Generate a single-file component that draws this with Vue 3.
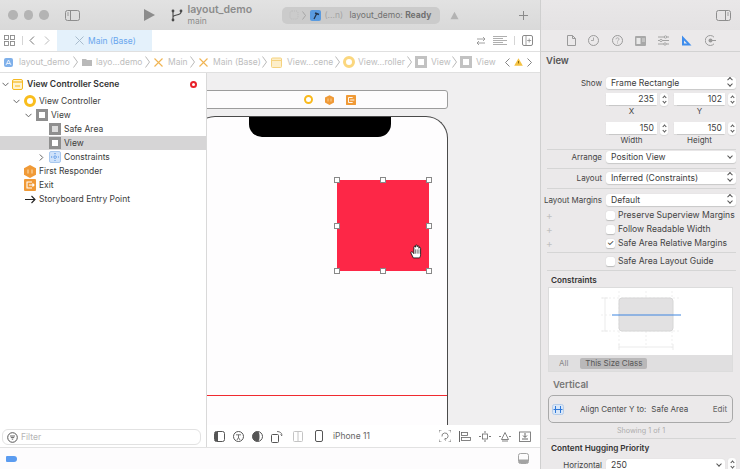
<script setup>
const outlineRows = [
  { label: 'View Controller', depth: 1, arrow: 'down', icon: 'vc' },
  { label: 'View', depth: 2, arrow: 'down', icon: 'view' },
  { label: 'Safe Area', depth: 3, icon: 'safe' },
  { label: 'View', depth: 3, icon: 'view', selected: true },
  { label: 'Constraints', depth: 3, arrow: 'right', icon: 'constraints' },
  { label: 'First Responder', depth: 1, icon: 'responder' },
  { label: 'Exit', depth: 1, icon: 'exit' },
  { label: 'Storyboard Entry Point', depth: 1, icon: 'entry' }
]

const handles = [
  [0, 0], [50, 0], [100, 0],
  [0, 50], [100, 50],
  [0, 100], [50, 100], [100, 100]
]

const marginChecks = [
  { label: 'Preserve Superview Margins', checked: false },
  { label: 'Follow Readable Width', checked: false },
  { label: 'Safe Area Relative Margins', checked: true }
]
</script>

<template>
  <div class="window">
    <div class="main">
      <header class="toolbar">
        <div class="lights"><i></i><i></i><i></i></div>
        <svg class="tb-side" width="15" height="11" viewBox="0 0 15 11"><rect x=".5" y=".5" width="14" height="10" rx="2" fill="none" stroke="#8d8d8d"/><path d="M5.5 .5v10" stroke="#8d8d8d"/><path d="M2 3h2M2 5h2" stroke="#8d8d8d" stroke-width=".8"/></svg>
        <svg class="tb-play" width="11" height="12" viewBox="0 0 11 12"><path d="M0 0l11 6-11 6z" fill="#8c8c8c"/></svg>
        <svg class="tb-branch" width="12" height="13" viewBox="0 0 12 13"><g fill="none" stroke="#4a4a4a" stroke-width="1.1"><path d="M2 2v9M2 8c0-3 8-1 8-5"/></g><circle cx="2" cy="2" r="1.4" fill="#4a4a4a"/><circle cx="2" cy="11" r="1.4" fill="#4a4a4a"/><circle cx="10" cy="2" r="1.4" fill="#4a4a4a"/></svg>
        <div class="tb-title"><b>layout_demo</b><span>main</span></div>
        <div class="scheme">
          <svg width="10" height="10" viewBox="0 0 10 10"><rect x="1" y="1" width="8" height="8" rx="2" fill="none" stroke="#bdbdbd" stroke-dasharray="1 1"/></svg>
          <svg class="scheme-chev" width="4" height="9" viewBox="0 0 4 9"><path d="M.5 .5l3 4-3 4" fill="none" stroke="#9c9c9c" stroke-width=".8"/></svg>
          <svg class="scheme-app" width="11" height="11" viewBox="0 0 11 11"><rect width="11" height="11" rx="2" fill="#5a9be0"/><path d="M4 9l3-6" stroke="#24344a" stroke-width="1.2"/><path d="M5 3l4 1.5" stroke="#24344a" stroke-width="1.4"/></svg>
          <span class="scheme-dim">(...n)</span>
          <span class="scheme-status">layout_demo: <b>Ready</b></span>
        </div>
        <svg class="tb-warn" width="9" height="9" viewBox="0 0 9 9"><path d="M4.5 .7L8.5 8.3H.5z" fill="#b3b3b3"/></svg>
        <svg class="tb-plus" width="9" height="9" viewBox="0 0 9 9"><path d="M4.5 0v9M0 4.5h9" stroke="#8a8a8a" stroke-width="1"/></svg>
      </header>

      <div class="tabbar">
        <svg class="tab-grid" width="11" height="11" viewBox="0 0 11 11"><g fill="none" stroke="#8a8a8a" stroke-width=".9"><rect x=".5" y=".5" width="4" height="4"/><rect x="6.5" y=".5" width="4" height="4"/><rect x=".5" y="6.5" width="4" height="4"/><rect x="6.5" y="6.5" width="4" height="4"/></g></svg>
        <i class="vsep"></i>
        <svg class="tab-back" width="6" height="9" viewBox="0 0 6 9"><path d="M5 .5l-4 4 4 4" fill="none" stroke="#777" stroke-width="1"/></svg>
        <svg class="tab-fwd" width="6" height="9" viewBox="0 0 6 9"><path d="M1 .5l4 4-4 4" fill="none" stroke="#bbb" stroke-width="1"/></svg>
        <div class="tab">
          <svg width="9" height="9" viewBox="0 0 9 9"><path d="M.5 .5l8 8M8.5 .5l-8 8" stroke="#a9bccd" stroke-width="1"/></svg>
          <span>Main (Base)</span>
        </div>
        <div class="tab-tools">
          <svg width="10" height="10" viewBox="0 0 10 10"><path d="M1 3h8M7 1l2 2-2 2M9 7H1M3 5L1 7l2 2" fill="none" stroke="#8a8a8a" stroke-width=".8"/></svg>
          <svg width="14" height="10" viewBox="0 0 14 10"><path d="M0 .5h14M0 2.5h10M0 4.5h14M0 6.5h10M0 8.5h14" stroke="#9a9a9a" stroke-width=".8"/></svg>
          <i class="vsep"></i>
          <svg width="11" height="11" viewBox="0 0 11 11"><rect x=".5" y=".5" width="10" height="10" rx="1.5" fill="none" stroke="#8a8a8a"/><path d="M4 .5v10M7.2 3.5v4M5.2 5.5h4" stroke="#8a8a8a" stroke-width=".8"/></svg>
        </div>
      </div>

      <nav class="jumpbar">
        <svg width="9" height="9" viewBox="0 0 9 9"><rect width="9" height="9" rx="2" fill="#7fb0ea"/><path d="M2 7l2.5-5L7 7M3 5.5h3" fill="none" stroke="#fff" stroke-width=".8"/></svg>
        <span class="crumb c1">layout_demo</span>
        <svg class="chev" width="5" height="12" viewBox="0 0 5 12"><path d="M.5 .5l4 5.5-4 5.5" fill="none" stroke="#a8a8a8" stroke-width=".8"/></svg>
        <svg width="10" height="8" viewBox="0 0 10 8"><path d="M0 1h4l1 1h5v6H0z" fill="#b9b9b9"/></svg>
        <span class="crumb c2">layo...demo</span>
        <svg class="chev" width="5" height="12" viewBox="0 0 5 12"><path d="M.5 .5l4 5.5-4 5.5" fill="none" stroke="#a8a8a8" stroke-width=".8"/></svg>
        <svg width="9" height="9" viewBox="0 0 9 9"><path d="M.5 .5l8 8M8.5 .5l-8 8" stroke="#f0b452" stroke-width="1.1"/></svg>
        <span class="crumb c3">Main</span>
        <svg class="chev" width="5" height="12" viewBox="0 0 5 12"><path d="M.5 .5l4 5.5-4 5.5" fill="none" stroke="#a8a8a8" stroke-width=".8"/></svg>
        <svg width="9" height="9" viewBox="0 0 9 9"><path d="M.5 .5l8 8M8.5 .5l-8 8" stroke="#f0b452" stroke-width="1.1"/></svg>
        <span class="crumb c4">Main (Base)</span>
        <svg class="chev" width="5" height="12" viewBox="0 0 5 12"><path d="M.5 .5l4 5.5-4 5.5" fill="none" stroke="#a8a8a8" stroke-width=".8"/></svg>
        <svg width="11" height="11" viewBox="0 0 11 11"><rect x=".5" y="1" width="10" height="9.5" rx="1" fill="#fdeec9" stroke="#f5d27e"/><path d="M.5 3.5h10" stroke="#f5d27e"/></svg>
        <span class="crumb c5">View...cene</span>
        <svg class="chev" width="5" height="12" viewBox="0 0 5 12"><path d="M.5 .5l4 5.5-4 5.5" fill="none" stroke="#a8a8a8" stroke-width=".8"/></svg>
        <i class="crumb-vc"></i>
        <span class="crumb c6">View...roller</span>
        <svg class="chev" width="5" height="12" viewBox="0 0 5 12"><path d="M.5 .5l4 5.5-4 5.5" fill="none" stroke="#a8a8a8" stroke-width=".8"/></svg>
        <i class="crumb-view"></i>
        <span class="crumb c7">View</span>
        <svg class="chev" width="5" height="12" viewBox="0 0 5 12"><path d="M.5 .5l4 5.5-4 5.5" fill="none" stroke="#a8a8a8" stroke-width=".8"/></svg>
        <i class="crumb-view"></i>
        <span class="crumb c7">View</span>
        <div class="jump-nav">
          <svg width="5" height="9" viewBox="0 0 5 9"><path d="M4.5 .5l-4 4 4 4" fill="none" stroke="#777" stroke-width=".9"/></svg>
          <svg width="9" height="8" viewBox="0 0 9 8"><path d="M4.5 .3L8.8 7.7H.2z" fill="#f5c242"/><path d="M4.5 3v2.4" stroke="#8a6a10"/></svg>
          <svg width="5" height="9" viewBox="0 0 5 9"><path d="M.5 .5l4 4-4 4" fill="none" stroke="#777" stroke-width=".9"/></svg>
        </div>
      </nav>

      <div class="workspace">
        <aside class="outline">
          <div class="scene-row">
            <svg class="arrow" width="7" height="5" viewBox="0 0 7 5"><path d="M.5 .8l3 3 3-3" fill="none" stroke="#666"/></svg>
            <svg class="scene-ic" width="11" height="11" viewBox="0 0 11 11"><rect x=".5" y=".5" width="10" height="10" rx="1.5" fill="#fff3d0" stroke="#f5b921"/><path d="M.5 3h10" stroke="#f5b921" stroke-width="1.2"/><path d="M3 7h5" stroke="#f5b921"/></svg>
            <b>View Controller Scene</b>
            <i class="red-dot"></i>
          </div>
          <div class="rows">
            <div v-for="row in outlineRows" :key="row.label + row.depth" class="row" :class="['d' + row.depth, { selected: row.selected }]">
              <span class="arrow">
                <svg v-if="row.arrow === 'down'" width="7" height="5" viewBox="0 0 7 5"><path d="M.5 .8l3 3 3-3" fill="none" stroke="#666"/></svg>
                <svg v-else-if="row.arrow === 'right'" width="5" height="7" viewBox="0 0 5 7"><path d="M.8 .5l3 3-3 3" fill="none" stroke="#666"/></svg>
              </span>
              <i v-if="row.icon === 'vc'" class="ic-vc"></i>
              <i v-else-if="row.icon === 'view'" class="ic-view"></i>
              <i v-else-if="row.icon === 'safe'" class="ic-view ic-safe"></i>
              <svg v-else-if="row.icon === 'constraints'" class="ic" width="12" height="12" viewBox="0 0 12 12"><rect x=".5" y=".5" width="11" height="11" rx="1.5" fill="#cfe2fa" stroke="#a9c8ee"/><path d="M6 2v8M2 6h8" stroke="#3d84e0" stroke-dasharray="1.2 1.2"/></svg>
              <svg v-else-if="row.icon === 'responder'" class="ic" width="12" height="13" viewBox="0 0 12 13"><path d="M6 0l6 3.2v6.6L6 13 0 9.8V3.2z" fill="#f09a37"/><path d="M4 4.5v4M8 4.5v4" stroke="#fce0b8"/></svg>
              <svg v-else-if="row.icon === 'exit'" class="ic" width="12" height="12" viewBox="0 0 12 12"><rect width="12" height="12" rx="1" fill="#f09a37"/><path d="M8 3H3v6h5M5 6h5M8.5 4.5L10 6 8.5 7.5" fill="none" stroke="#fff" stroke-width="1.1"/></svg>
              <svg v-else class="ic" width="12" height="9" viewBox="0 0 12 9"><path d="M1 4.5h10M7.5 1L11 4.5 7.5 8" fill="none" stroke="#222" stroke-width="1.1"/></svg>
              <span class="row-label">{{ row.label }}</span>
            </div>
          </div>
          <div class="filter">
            <svg width="11" height="11" viewBox="0 0 11 11"><circle cx="5.5" cy="5.5" r="4.8" fill="none" stroke="#555"/><path d="M3 4h5M3.8 5.6h3.4M4.8 7.2h1.4" stroke="#555" stroke-width=".9"/></svg>
            <span>Filter</span>
          </div>
        </aside>

        <section class="canvas-col">
          <div class="canvas">
            <div class="scene-bar">
              <i class="bar-vc"></i>
              <svg width="9" height="10" viewBox="0 0 12 13"><path d="M6 0l6 3.2v6.6L6 13 0 9.8V3.2z" fill="#f09a37"/><path d="M4 4.5v4M8 4.5v4" stroke="#fce0b8"/></svg>
              <svg width="10" height="10" viewBox="0 0 12 12"><rect width="12" height="12" rx="1" fill="#f09a37"/><path d="M8 3H3v6h5M5 6h5" fill="none" stroke="#fff" stroke-width="1.1"/></svg>
            </div>
            <div class="phone">
              <div class="notch"></div>
              <div class="red-view">
                <i v-for="h in handles" :key="h.join()" class="handle" :style="{ left: h[0] + '%', top: h[1] + '%' }"></i>
                <svg class="hand" width="12" height="15" viewBox="0 0 11 14"><path d="M3 13L.8 8.5C.3 7.3 1.8 6.8 2.5 7.8L3.5 9V3C3.5 1.8 5 1.8 5 3V1.8C5 .6 6.6 .6 6.6 1.8V2.5C6.6 1.3 8.2 1.3 8.2 2.5V4C8.2 2.8 9.8 2.8 9.8 4V10C9.8 11.5 9 12.5 8.8 13z" fill="#fff" stroke="#111" stroke-width=".8"/><path d="M5 5v4M6.6 5v4M8.2 5v4" stroke="#555" stroke-width=".7"/></svg>
              </div>
              <div class="safe-line"></div>
            </div>
          </div>
          <div class="canvas-tools">
            <svg width="11" height="11" viewBox="0 0 11 11"><rect x=".5" y=".5" width="10" height="10" rx="2" fill="none" stroke="#555"/><rect x="1" y="1" width="3" height="9" fill="#555"/></svg>
            <svg width="11" height="11" viewBox="0 0 11 11"><circle cx="5.5" cy="5.5" r="5" fill="none" stroke="#555"/><path d="M3 3.8h5M5.5 3.8v3M5.5 6.5L4 9M5.5 6.5L7 9" stroke="#555" stroke-width=".8" fill="none"/></svg>
            <svg width="11" height="11" viewBox="0 0 11 11"><circle cx="5.5" cy="5.5" r="5" fill="#fff" stroke="#555"/><path d="M5.5 .5a5 5 0 000 10 2 5 0 000-10z" fill="#555"/></svg>
            <svg width="12" height="13" viewBox="0 0 12 13"><rect x=".5" y="4.5" width="7" height="8" rx="1" fill="none" stroke="#555"/><path d="M6 1.5c3 0 5 1.5 5 4M9.5 4.5l1.5 1.5" fill="none" stroke="#555" stroke-width=".8"/></svg>
            <svg class="tool-split" width="10" height="11" viewBox="0 0 10 11"><rect x=".5" y=".5" width="9" height="10" rx="1" fill="none" stroke="#c4c4c4"/><path d="M5 .5v10" stroke="#c4c4c4"/></svg>
            <svg class="tool-phone" width="8" height="12" viewBox="0 0 8 12"><rect x=".5" y=".5" width="7" height="11" rx="1.5" fill="none" stroke="#555"/></svg>
            <span class="device">iPhone 11</span>
            <div class="canvas-tools-right">
              <svg width="12" height="12" viewBox="0 0 12 12"><path d="M0 2.5V0h2.500M9.5 0H12v2.5M0 9.5V12h2.500M9.5 12H12V9.5" fill="none" stroke="#666" stroke-width=".8"/><path d="M3 6.500A3 3 0 119 5.500 3 3 0 016 9M6.800 8L5.500 9.300 6.800 10.500" fill="none" stroke="#666" stroke-width=".8"/></svg>
              <svg width="12" height="11" viewBox="0 0 12 11"><path d="M.5 0v11" stroke="#666"/><rect x="2.5" y="1.5" width="6" height="3" fill="none" stroke="#666" stroke-width=".8"/><rect x="2.5" y="6.5" width="9" height="3" fill="none" stroke="#666" stroke-width=".8"/></svg>
              <svg width="12" height="11" viewBox="0 0 12 11"><rect x="3.5" y="3" width="5" height="5" fill="none" stroke="#666" stroke-width=".8"/><path d="M6 0v2M6 9v2M0 5.5h2M10 5.5h2" stroke="#666" stroke-width=".9"/></svg>
              <svg width="12" height="11" viewBox="0 0 12 11"><path d="M6 1.5l3.5 7h-7z" fill="none" stroke="#666" stroke-width=".8"/><path d="M0 5.5h2M10 5.5h2M3 10h6" stroke="#666" stroke-width=".8"/></svg>
              <svg width="12" height="11" viewBox="0 0 12 11"><rect x=".5" y="1" width="11" height="9.5" fill="none" stroke="#666" stroke-width=".8"/><path d="M6 2v4M4 4.5L6 6.500l2-2M3 8h6" fill="none" stroke="#555" stroke-width=".9"/></svg>
            </div>
          </div>
        </section>
      </div>

      <footer class="debugbar">
        <i class="tag"></i>
        <svg width="11" height="11" viewBox="0 0 11 11"><rect x=".5" y=".5" width="10" height="10" rx="2" fill="none" stroke="#a3a3a3"/><rect x="1" y="6.5" width="9" height="3.5" fill="#a3a3a3"/></svg>
      </footer>
    </div>

    <aside class="inspector">
      <div class="insp-top">
        <svg width="15" height="11" viewBox="0 0 15 11"><rect x=".5" y=".5" width="14" height="10" rx="2" fill="none" stroke="#8d8d8d"/><path d="M9.5 .5v10" stroke="#8d8d8d"/><path d="M11 3h2M11 5h2" stroke="#8d8d8d" stroke-width=".8"/></svg>
      </div>
      <div class="insp-tabs">
        <svg width="9" height="11" viewBox="0 0 9 11"><path d="M.5 .5h5l3 3v7h-8z M5.5 .5v3h3" fill="none" stroke="#9a9a9a"/></svg>
        <svg width="11" height="11" viewBox="0 0 11 11"><circle cx="5.5" cy="5.5" r="5" fill="none" stroke="#9a9a9a"/><path d="M5.5 2.5v3H3" fill="none" stroke="#9a9a9a" stroke-width=".8"/></svg>
        <svg width="11" height="11" viewBox="0 0 11 11"><circle cx="5.5" cy="5.5" r="5" fill="none" stroke="#9a9a9a"/><path d="M4 4.3c0-2 3-2 3 0 0 1-1.500 1-1.500 2.200M5.5 7.5v1" fill="none" stroke="#9a9a9a" stroke-width=".8"/></svg>
        <svg width="11" height="10" viewBox="0 0 11 10"><rect width="11" height="10" rx="1" fill="#a8a8a8"/><rect x="1.5" y="2" width="4" height="6" fill="#e9e9e9"/><path d="M7 3h3M7 5h3" stroke="#e9e9e9" stroke-width=".8"/></svg>
        <svg width="11" height="11" viewBox="0 0 11 11"><path d="M0 2h11M0 5.5h11M0 9h11" stroke="#9a9a9a" stroke-width=".9"/><circle cx="7.5" cy="2" r="1.2" fill="#ececec" stroke="#9a9a9a" stroke-width=".8"/><circle cx="3" cy="5.5" r="1.2" fill="#ececec" stroke="#9a9a9a" stroke-width=".8"/><circle cx="7" cy="9" r="1.2" fill="#ececec" stroke="#9a9a9a" stroke-width=".8"/></svg>
        <svg width="11" height="11" viewBox="0 0 11 11"><path d="M1 .5v10h9.500z" fill="#3f8ded"/><path d="M3 5.500v3h3z" fill="#ececec"/></svg>
        <svg width="11" height="11" viewBox="0 0 11 11"><path d="M9 2.200a5 5 0 100 6.600" fill="none" stroke="#9a9a9a"/><circle cx="5.5" cy="5.5" r="2" fill="#9a9a9a"/><path d="M5.5 5.5H11" stroke="#9a9a9a"/></svg>
      </div>

      <div class="insp-body">
        <h3 class="insp-title">View</h3>

        <div class="form-row show-row">
          <label>Show</label>
          <div class="select">Frame Rectangle<span class="updown"></span></div>
        </div>

        <div class="frame-grid first">
          <div class="num">235</div><span class="stepper"></span>
          <div class="num">102</div><span class="stepper"></span>
          <span class="cap">X</span><span></span>
          <span class="cap">Y</span><span></span>
        </div>
        <div class="frame-grid">
          <div class="num">150</div><span class="stepper"></span>
          <div class="num">150</div><span class="stepper"></span>
          <span class="cap">Width</span><span></span>
          <span class="cap">Height</span><span></span>
        </div>

        <hr class="sep s1" />
        <div class="form-row">
          <label>Arrange</label>
          <div class="select">Position View<span class="down"></span></div>
        </div>
        <hr class="sep s2" />
        <div class="form-row">
          <label>Layout</label>
          <div class="select">Inferred (Constraints)<span class="updown"></span></div>
        </div>
        <hr class="sep s3" />
        <div class="form-row">
          <label>Layout Margins</label>
          <div class="select">Default<span class="updown"></span></div>
        </div>

        <div class="checks">
          <div v-for="c in marginChecks" :key="c.label" class="check-row">
            <span class="plus">+</span>
            <span class="box">{{ c.checked ? '✓' : '' }}</span>
            <span>{{ c.label }}</span>
          </div>
        </div>
        <hr class="sep s4" />
        <div class="check-row">
          <span class="plus"></span>
          <span class="box"></span>
          <span>Safe Area Layout Guide</span>
        </div>
        <hr class="sep s5" />

        <h4 class="sub-head">Constraints</h4>
        <div class="constraints">
          <svg class="diagram" width="183" height="67" viewBox="0 0 183 67">
            <g stroke="#efefef" stroke-dasharray="2 2" fill="none">
              <path d="M70 3v57M97 3v57M123 3v57M52 10h80M52 43h80M52 27h10"/>
            </g>
            <rect x="70" y="10" width="54" height="33" rx="3" fill="#e2e1e2" stroke="#d6d6d6"/>
            <path d="M70 59h54M70 56v6M124 56v6M53 10h6M53 43h6M56 10v33" stroke="#ebebeb" fill="none"/>
            <path d="M63 27h69" stroke="#3f86e0" stroke-width="1.2"/>
          </svg>
          <div class="size-tabs">
            <span class="all">All</span>
            <span class="pill">This Size Class</span>
          </div>
        </div>

        <h4 class="vertical">Vertical</h4>
        <div class="c-card">
          <svg width="12" height="11" viewBox="0 0 12 11"><rect x=".5" y=".5" width="11" height="10" rx="2" fill="#d9e7f8" stroke="#b6cde9"/><path d="M3.5 2v7M8.5 2v7M1.5 5.5h9" stroke="#2f78d8" stroke-width="1"/></svg>
          <span class="c-text">Align Center Y to:</span>
          <span class="c-target">Safe Area</span>
          <span class="c-edit">Edit</span>
        </div>
        <div class="showing">Showing 1 of 1</div>
        <hr class="sep s6" />
        <h4 class="sub-head hug">Content Hugging Priority</h4>
        <div class="form-row hug-row">
          <label>Horizontal</label>
          <div class="select short">250<span class="down"></span></div>
          <span class="stepper"></span>
        </div>
      </div>
    </aside>
  </div>
</template>

<style scoped>
.window {
  display: flex;
  width: 740px;
  height: 469px;
  overflow: hidden;
  font-family: Inter, "Liberation Sans", sans-serif;
  font-size: 8.5px;
  color: #3c3c3c;
  background: #fff;
}
.main {
  width: 540px;
  display: flex;
  flex-direction: column;
  flex-shrink: 0;
}

/* toolbar */
.toolbar {
  height: 30px;
  display: flex;
  align-items: center;
  background: linear-gradient(#e2e2e2, #d9d9d9);
  flex-shrink: 0;
}
.lights {
  display: flex;
  gap: 6px;
  margin-left: 8px;
}
.lights i {
  width: 9.5px;
  height: 9.5px;
  border-radius: 50%;
  background: #b4b4b4;
}
.tb-side { margin-left: 16px; }
.tb-play { margin-left: 64px; }
.tb-branch { margin-left: 16px; }
.tb-title {
  margin-left: 5px;
  width: 94px;
  display: flex;
  flex-direction: column;
  color: #8c8c8c;
}
.tb-title b {
  font-size: 10.5px;
  line-height: 12px;
  font-weight: 600;
}
.tb-title span {
  font-size: 8.5px;
  line-height: 11px;
}
.scheme {
  width: 158px;
  height: 17px;
  border-radius: 5px;
  background: #cbcbcb;
  display: flex;
  align-items: center;
  padding-left: 7px;
  box-sizing: border-box;
  color: #717171;
  font-size: 8.5px;
  white-space: nowrap;
}
.scheme-chev { margin-left: 3px; }
.scheme-app { margin-left: 4px; }
.scheme-dim {
  margin-left: 4px;
  width: 22px;
  color: #a3a3a3;
}
.scheme-status { margin-left: 3px; }
.tb-warn { margin-left: 10px; }
.tb-plus { margin-left: 60px; }

/* tabs */
.tabbar {
  height: 21px;
  display: flex;
  align-items: center;
  background: #fff;
  flex-shrink: 0;
}
.tab-grid { margin-left: 4px; }
.vsep {
  width: 1px;
  height: 9px;
  background: #d5d5d5;
}
.tabbar > .vsep { margin-left: 7px; }
.tab-back { margin-left: 6px; }
.tab-fwd { margin-left: 9px; }
.tab {
  margin-left: 7px;
  width: 95px;
  height: 21px;
  background: #e4f1fb;
  display: flex;
  align-items: center;
  gap: 4px;
  padding-left: 18px;
  box-sizing: border-box;
  color: #6aa7ee;
  font-size: 8.5px;
}
.tab-tools {
  margin-left: auto;
  margin-right: 7px;
  display: flex;
  align-items: center;
  gap: 7px;
}

/* jump bar */
.jumpbar {
  height: 20px;
  display: flex;
  align-items: center;
  padding-left: 4px;
  border-top: 1px solid #e0e0e0;
  border-bottom: 1px solid #e0e0e0;
  flex-shrink: 0;
  color: #bdbdbd;
  font-size: 8.5px;
  white-space: nowrap;
}
.crumb { margin-left: 5px; }
.c1 { margin-left: 6px; width: 52px; }
.c2 { margin-left: 4px; width: 47px; }
.c3 { width: 20px; }
.c4 { width: 47px; }
.c5 { width: 46px; }
.c6 { margin-left: 3px; width: 47px; }
.c7 { margin-left: 4px; width: 19px; }
.chev {
  margin-left: 2px;
  flex-shrink: 0;
}
.chev + svg { margin-left: 4px; }
.chev + i { margin-left: 3px; }
.crumb-vc {
  width: 6px;
  height: 6px;
  border: 3px solid #fbd77e;
  border-radius: 50%;
  background: #fff;
}
.crumb-view {
  width: 6px;
  height: 6px;
  border: 3px solid #c2c2c2;
  background: #fff;
}
.jump-nav {
  margin-left: 10px;
  display: flex;
  align-items: center;
  gap: 4px;
}

/* outline */
.workspace {
  flex: 1;
  min-height: 0;
  display: flex;
}
.outline {
  width: 206px;
  flex-shrink: 0;
  border-right: 1px solid #d9d9d9;
  display: flex;
  flex-direction: column;
  position: relative;
  background: #fff;
}
.scene-row {
  height: 20px;
  margin-top: 1px;
  display: flex;
  align-items: center;
  padding-left: 2px;
  color: #333;
}
.scene-row b {
  font-size: 8.6px;
  font-weight: 600;
  margin-left: 4px;
}
.scene-row .arrow { margin-right: 3px; }
.red-dot {
  width: 3px;
  height: 3px;
  border: 2px solid #e8222a;
  border-radius: 50%;
  margin-left: auto;
  margin-right: 9px;
  background: #fff;
}
.row {
  height: 14px;
  display: flex;
  align-items: center;
  color: #3c3c3c;
}
.row.selected { background: #d6d5d6; }
.row .arrow {
  width: 7px;
  margin-right: 4px;
  display: inline-flex;
  justify-content: center;
  flex-shrink: 0;
}
.d1 { padding-left: 13px; }
.d2 { padding-left: 25px; }
.d3 { padding-left: 38px; }
.row-label { margin-left: 3px; }
.ic { flex-shrink: 0; }
.ic-vc {
  width: 6px;
  height: 6px;
  border: 3px solid #f9bd1c;
  border-radius: 50%;
  background: #fff;
  flex-shrink: 0;
}
.ic-view {
  width: 6px;
  height: 6px;
  border: 3px solid #8f8f8f;
  background: #fff;
  flex-shrink: 0;
}
.ic-safe { background: #dcdcdc; }
.filter {
  position: absolute;
  left: 2px;
  right: 5px;
  bottom: 2px;
  height: 14px;
  border: 1px solid #e2e2e2;
  border-radius: 6px;
  display: flex;
  align-items: center;
  gap: 3px;
  padding-left: 4px;
  color: #b5b5b5;
}

/* canvas */
.canvas-col {
  flex: 1;
  min-width: 0;
  display: flex;
  flex-direction: column;
}
.canvas {
  flex: 1;
  position: relative;
  overflow: hidden;
  background: #f0eff0;
}
.scene-bar {
  position: absolute;
  left: -4px;
  top: 17px;
  width: 245px;
  height: 19px;
  box-sizing: border-box;
  border: 1px solid #9c9c9c;
  border-radius: 3px;
  background: #fdfcfd;
  display: flex;
  align-items: center;
  justify-content: center;
  gap: 12px;
  padding-left: 8px;
}
.bar-vc {
  width: 5px;
  height: 5px;
  border: 2px solid #f9b91c;
  border-radius: 50%;
  background: #fff;
}
.phone {
  position: absolute;
  left: -14px;
  top: 43px;
  width: 255px;
  height: 380px;
  box-sizing: border-box;
  border: 1px solid #4a4a4a;
  border-bottom: 0;
  border-radius: 22px 22px 0 0;
  background: #fefdfe;
}
.notch {
  position: absolute;
  left: 55px;
  top: 0;
  width: 142px;
  height: 20px;
  background: #000;
  border-radius: 0 0 13px 13px;
}
.red-view {
  position: absolute;
  left: 143px;
  top: 63px;
  width: 92px;
  height: 91px;
  background: #fd2747;
}
.handle {
  position: absolute;
  width: 4px;
  height: 4px;
  margin: -3px 0 0 -3px;
  background: #fff;
  border: 1px solid #888;
}
.hand {
  position: absolute;
  left: 73px;
  top: 64px;
}
.safe-line {
  position: absolute;
  left: 0;
  right: 0;
  top: 278px;
  height: 1px;
  background: #f02a30;
}
.canvas-tools {
  height: 22px;
  flex-shrink: 0;
  background: #fff;
  display: flex;
  align-items: center;
  gap: 8px;
  padding-left: 7px;
}
.tool-split { margin-left: 2px; }
.tool-phone { margin-left: 4px; }
.device {
  margin-left: 2px;
  color: #666;
}
.canvas-tools-right {
  margin-left: auto;
  margin-right: 9px;
  display: flex;
  gap: 8px;
  align-items: center;
}

/* bottom */
.debugbar {
  height: 22px;
  box-sizing: border-box;
  flex-shrink: 0;
  border-top: 1px solid #e2e2e2;
  background: #fdfcfd;
  display: flex;
  align-items: center;
  justify-content: space-between;
  padding: 0 11px 0 6px;
}
.tag {
  width: 11px;
  height: 6px;
  background: #5b9cf0;
  border-radius: 1px 3px 3px 1px;
}

/* inspector */
.inspector {
  width: 200px;
  flex-shrink: 0;
  border-left: 1px solid #cfcfcf;
  background: #ebe9ea;
  overflow: hidden;
  box-sizing: border-box;
}
.insp-top {
  height: 30px;
  background: linear-gradient(#e9e7e8, #e4e2e3);
  display: flex;
  align-items: center;
  justify-content: flex-end;
  padding-right: 9px;
}
.insp-tabs {
  height: 22px;
  box-sizing: border-box;
  border-bottom: 1px solid #d2d2d2;
  display: flex;
  align-items: center;
  padding-left: 26px;
  gap: 12.3px;
}
.insp-body { padding: 0 4px 0 5px; }
.insp-title {
  margin: 1px 0 0;
  height: 16px;
  line-height: 16px;
  font-size: 9.5px;
  font-weight: 600;
  color: #555;
}
.form-row {
  display: flex;
  align-items: center;
  gap: 4px;
}
.form-row label {
  width: 56px;
  flex-shrink: 0;
  display: flex;
  justify-content: flex-end;
  color: #444;
  font-size: 8px;
  white-space: nowrap;
}
.show-row { margin-top: 8px; }
.select {
  flex: 1;
  height: 12px;
  line-height: 12px;
  background: #fff;
  border-radius: 3px;
  padding-left: 5px;
  font-size: 8.6px;
  color: #3c3c3c;
  position: relative;
  box-shadow: 0 0.5px 1px #c8c8c8;
}
.select.short {
  flex: none;
  width: 119px;
  box-sizing: border-box;
}
.updown, .down {
  position: absolute;
  right: 4px;
  top: 3px;
  width: 3px;
  height: 3px;
  border-right: 1px solid #555;
  border-bottom: 1px solid #555;
  transform: rotate(45deg);
}
.updown { top: 5px; }
.updown::before {
  content: "";
  position: absolute;
  left: -3px;
  top: -3px;
  width: 3px;
  height: 3px;
  border-left: 1px solid #555;
  border-top: 1px solid #555;
}
.frame-grid {
  margin-left: 60px;
  display: grid;
  grid-template-columns: 51px 17px 51px 11px;
  grid-template-rows: 12px 12px;
}
.frame-grid.first {
  margin-top: 4px;
  margin-bottom: 5px;
}
.num {
  background: #fff;
  text-align: right;
  padding-right: 3px;
  line-height: 12px;
  font-size: 8.6px;
  color: #3c3c3c;
  box-shadow: 0 0.5px 1px #c8c8c8;
}
.stepper {
  position: relative;
  width: 8px;
  height: 13px;
  margin-left: 3px;
  flex-shrink: 0;
  border-radius: 3px;
  background: #fdfdfd;
  box-shadow: 0 0.5px 1px #c8c8c8;
}
.stepper::before, .stepper::after {
  content: "";
  position: absolute;
  left: 2.5px;
  width: 2px;
  height: 2px;
  border-left: 1px solid #555;
  border-top: 1px solid #555;
}
.stepper::before {
  top: 3px;
  transform: rotate(45deg);
}
.stepper::after {
  top: 7px;
  transform: rotate(225deg);
}
.cap {
  text-align: center;
  line-height: 12px;
  font-size: 8px;
  color: #444;
}
.sep {
  border: 0;
  height: 1px;
  background: #d5d5d5;
  margin: 0 0 0 1px;
}
.s1 { margin-top: 3px; margin-bottom: 1px; }
.s2 { margin-top: 5px; margin-bottom: 3px; }
.s3 { margin-top: 4px; margin-bottom: 5px; }
.s4 { margin-top: 2px; margin-bottom: 1px; }
.s5 { margin-top: 2px; margin-bottom: 2px; }
.checks { margin-top: 2px; }
.check-row {
  height: 14px;
  display: flex;
  align-items: center;
  font-size: 8.6px;
  color: #444;
  white-space: nowrap;
}
.plus {
  width: 60px;
  flex-shrink: 0;
  color: #c0c0c0;
  font-size: 10px;
}
.box {
  width: 9px;
  height: 9px;
  flex-shrink: 0;
  background: #fff;
  border-radius: 2px;
  box-shadow: 0 0.5px 1px #bbb;
  margin-right: 3px;
  font-size: 8px;
  line-height: 9px;
  text-align: center;
  color: #222;
}
.sub-head {
  margin: 0;
  height: 14px;
  line-height: 14px;
  padding-left: 5px;
  font-size: 8.2px;
  font-weight: 600;
  color: #333;
  white-space: nowrap;
}
.constraints {
  margin: 0 3px 0 2px;
  border: 1px solid #dcdcdc;
  box-sizing: border-box;
  height: 85px;
  background: #fff;
}
.diagram { display: block; }
.size-tabs {
  height: 16px;
  background: #e0dfe0;
  display: flex;
  align-items: center;
  font-size: 8px;
  color: #888;
}
.all { margin-left: 10px; }
.pill {
  margin-left: 12px;
  width: 67px;
  height: 11px;
  line-height: 11px;
  text-align: center;
  border-radius: 2px;
  background: #b9b8b9;
  color: #555;
}
.vertical {
  margin: 6px 0 0 7px;
  height: 14px;
  line-height: 14px;
  font-size: 9.5px;
  font-weight: 600;
  color: #777;
}
.c-card {
  margin: 3px 3px 0 2px;
  height: 28px;
  box-sizing: border-box;
  border: 1px solid #a9a9a9;
  border-radius: 5px;
  display: flex;
  align-items: center;
  padding-left: 3px;
  font-size: 8px;
  color: #4a4a4a;
}
.c-text { margin-left: 16px; }
.c-target { margin-left: 5px; }
.c-edit {
  margin-left: auto;
  margin-right: 5px;
  color: #666;
}
.showing {
  height: 14px;
  margin-top: 1px;
  line-height: 14px;
  text-align: center;
  color: #adadad;
  font-size: 7.2px;
}
.hug { margin-top: 2px; }
.hug-row { margin-top: 3px; }
.hug-row .stepper { margin-left: -1px; }
</style>

<style>
html, body { margin: 0; background: #fff; overflow: hidden; }
</style>
